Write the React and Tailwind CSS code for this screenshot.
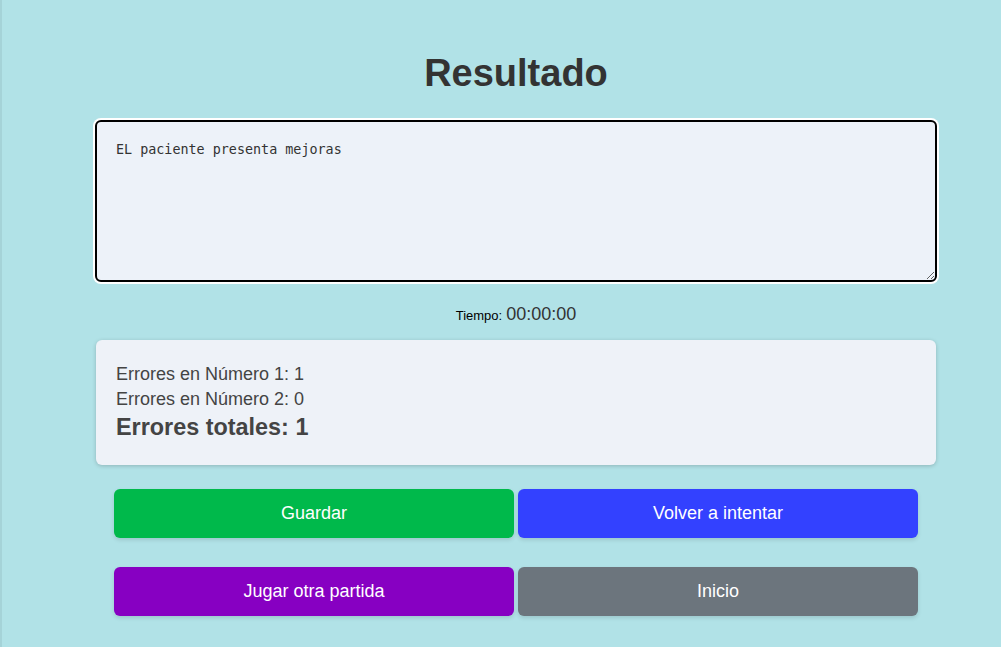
import React, { useState } from 'react';

const buttons = [
  { label: 'Guardar', cls: 'bg-[#00b94b]' },
  { label: 'Volver a intentar', cls: 'bg-[#3341ff]' },
  { label: 'Jugar otra partida', cls: 'bg-[#8700c2]' },
  { label: 'Inicio', cls: 'bg-[#6c757d]' },
];

export default function App() {
  const [note, setNote] = useState('EL paciente presenta mejoras');

  return (
    <div className="min-h-[647px] bg-[#b1e2e7] border-l-2 border-[#a5d3d8] font-['Liberation_Sans',Arial,sans-serif] flex justify-center pl-[29px]">
      <div className="w-[842px] flex flex-col items-center">
        <h1 className="mt-[49px] text-[38px] leading-[48px] font-bold text-[#333333]">Resultado</h1>
        <textarea
          value={note}
          onChange={e => setNote(e.target.value)}
          className="mt-[23px] w-full h-[162px] rounded-md border-2 border-black bg-[#edf2f9] px-[19px] pt-[18px] pb-[19px] text-[13.4px] leading-5 text-[#333] font-['DejaVu_Sans_Mono',monospace] shadow-[0_0_0_2px_#fff] outline-none resize-y"
        />
        <div className="mt-[19px] flex items-baseline gap-1 text-black">
          <span className="text-[13px]">Tiempo:</span>
          <span className="text-[18px] text-[#333]">00:00:00</span>
        </div>
        <div className="mt-[12px] w-[840px] rounded-md bg-[#eef2f8] shadow-[0_1px_4px_rgba(0,0,0,0.2)] px-5 pt-[22px] pb-[23px] text-[#444]">
          <p className="text-[18px] leading-[25px]">Errores en Número 1: 1</p>
          <p className="text-[18px] leading-[25px]">Errores en Número 2: 0</p>
          <p className="text-[23.4px] leading-[30px] font-bold">Errores totales: 1</p>
        </div>
        <div className="mt-[24px] grid grid-cols-2 gap-x-1 gap-y-[29px] w-[804px]">
          {buttons.map(b => (
            <button key={b.label} className={`${b.cls} h-[49px] rounded-md text-white text-[18px] shadow-[0_2px_4px_rgba(0,0,0,0.12)]`}>{b.label}</button>
          ))}
        </div>
      </div>
    </div>
  );
}
